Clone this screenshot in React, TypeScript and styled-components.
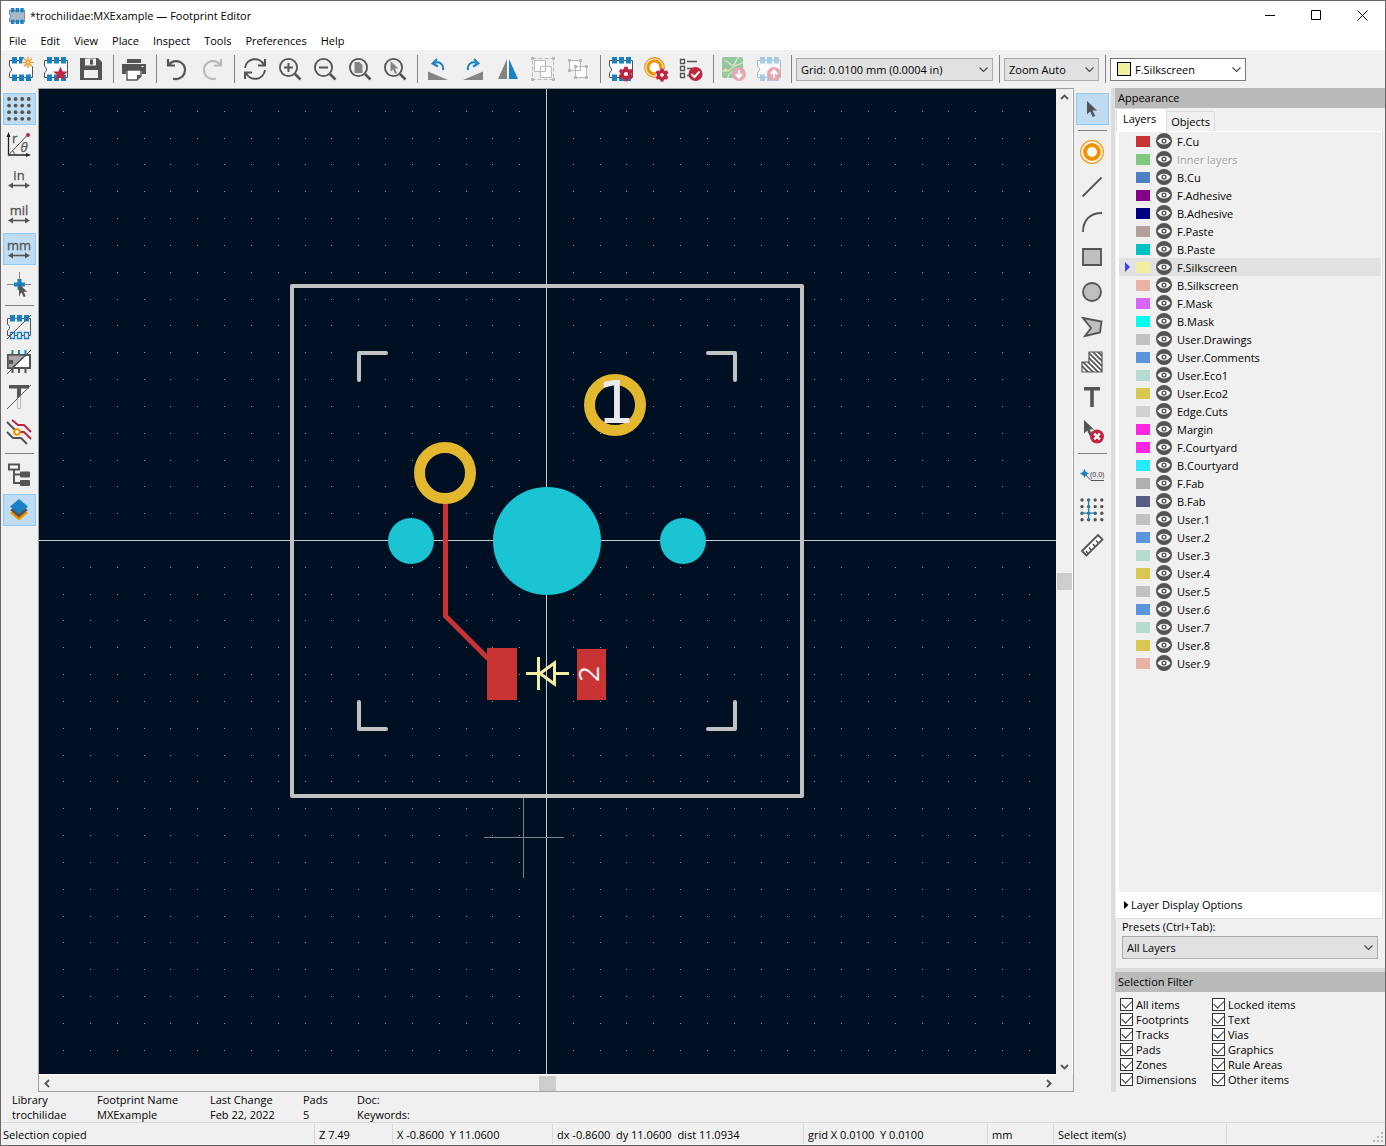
import React from "react";
import styled, { createGlobalStyle, css } from "styled-components";

const BLUE = "#1a81c4";
const DARK = "#545454";
const RED = "#bf2641";
const ORANGE = "#f29100";
const FACE = "#f0f0f0";
const LINE = "#a0a0a0";

const Global = createGlobalStyle`
  * { box-sizing: border-box; }
  body { margin: 0; }
  body, button, select, input {
    font-family: "Open Sans", "Noto Sans", sans-serif;
    font-size: 11px;
    line-height: 15px;
    color: #000;
  }
`;

/* ---------- window chrome ---------- */

const Window = styled.div`
  display: flex;
  flex-direction: column;
  min-height: 100vh;
  border: 1px solid #666;
  background: ${FACE};
`;

const TitleBar = styled.header`
  display: flex;
  align-items: center;
  height: 29px;
  padding-left: 8px;
  gap: 5px;
  background: #fff;
`;

const Title = styled.h1`
  flex: 1;
  margin: 0;
  font-size: 11px;
  font-weight: 400;
`;

const CaptionButtons = styled.div`
  display: flex;
`;

const CaptionButton = styled.button`
  display: grid;
  place-items: center;
  width: 46px;
  height: 29px;
  padding: 0;
  border: 0;
  background: none;
`;

const MenuBar = styled.nav`
  display: flex;
  height: 20px;
  padding: 0 1px 1px;
  background: #fff;
`;

const MenuItem = styled.button`
  padding: 2px 7px 1px;
  border: 0;
  background: none;
`;

/* ---------- toolbars ---------- */

const TopBar = styled.div`
  display: flex;
  align-items: center;
  gap: 3px;
  height: 38px;
  padding: 0 4px;
`;

const SideBar = styled.div`
  display: flex;
  flex-direction: column;
  flex: none;
  align-items: center;
  gap: 3px;
  width: 37px;
  padding-top: 5px;
`;

const ToolButton = styled.button<{ $active?: boolean; $wide?: boolean }>`
  display: grid;
  place-items: center;
  flex: none;
  width: ${(p) => (p.$wide ? 33 : 32)}px;
  height: 32px;
  padding: ${(p) => (p.$wide ? "0 1px 0 0" : "0")};
  border: 1px solid ${(p) => (p.$active ? "#90c8f6" : "transparent")};
  background: ${(p) => (p.$active ? "#c0dcf3" : "transparent")};
`;

const Rule = styled.span<{ $across?: boolean }>`
  flex: none;
  ${(p) =>
    p.$across
      ? css`
          width: 29px;
          height: 5px;
          background: linear-gradient(#848484, #848484) center / 100% 1px no-repeat;
        `
      : css`
          width: 5px;
          height: 28px;
          background: linear-gradient(#848484, #848484) 3px 0 / 1px 100% no-repeat;
        `}
`;

const Picker = styled.span<{ $width?: number; $light?: boolean }>`
  position: relative;
  display: flex;
  flex: none;
  align-items: center;
  width: ${(p) => (p.$width ? p.$width + "px" : "auto")};
  height: 23px;
  border: 1px solid ${(p) => (p.$light ? "#7a7a7a" : "#adadad")};
  background: ${(p) => (p.$light ? "#fff" : "#e1e1e1")};
`;

const PickerSelect = styled.select`
  appearance: none;
  flex: 1;
  min-width: 0;
  height: 21px;
  padding: 0 20px 0 4px;
  border: 0;
  background: transparent;
`;

const PickerArrow = styled.svg`
  position: absolute;
  right: 4px;
  top: 8px;
  pointer-events: none;
`;

const PickerSwatch = styled.span`
  width: 14px;
  height: 14px;
  margin-left: 6px;
  border: 1px solid #000;
  background: #f2eda1;
`;

/* ---------- work area ---------- */

const Work = styled.main`
  display: flex;
  flex: 1;
`;

const CanvasFrame = styled.section`
  display: grid;
  grid-template-columns: 1fr 17px;
  grid-template-rows: 1fr 17px;
  flex: 1;
  min-width: 0;
  border: 1px solid ${LINE};
`;

const Board = styled.div`
  position: relative;
  min-height: 760px;
  background: #001023;
`;

const Drawing = styled.svg`
  position: absolute;
  inset: 0;
  width: 100%;
  height: 100%;
`;

const ScrollTrack = styled.div<{ $across?: boolean }>`
  display: flex;
  flex-direction: ${(p) => (p.$across ? "row" : "column")};
  align-items: center;
  justify-content: space-between;
  border-right: ${(p) => (p.$across ? "0" : "1px solid #fff")};
  border-top: ${(p) => (p.$across ? "1px solid #fff" : "0")};
`;

const ScrollButton = styled.button`
  display: grid;
  place-items: center;
  width: 16px;
  height: 16px;
  padding: 0;
  border: 0;
  background: none;
`;

const Thumb = styled.span<{ $across?: boolean }>`
  width: ${(p) => (p.$across ? 17 : 15)}px;
  height: ${(p) => (p.$across ? 15 : 17)}px;
  background: #cdcdcd;
`;

/* ---------- side panels ---------- */

const Side = styled.aside`
  display: flex;
  flex-direction: column;
  flex: none;
  width: 274px;
  border-left: 4px solid #dcdcdc;
`;

const PanelTitle = styled.h2`
  flex: none;
  height: 20px;
  margin: 0;
  padding: 2px 3px;
  font-size: 11px;
  line-height: 15px;
  font-weight: 400;
  background: #bababa;
`;

const Tabs = styled.div`
  display: flex;
  align-items: flex-end;
  height: 23px;
  padding-left: 1px;
`;

const Tab = styled.button<{ $active?: boolean }>`
  height: ${(p) => (p.$active ? 23 : 20)}px;
  padding: ${(p) => (p.$active ? "0 10px 4px 6px" : "0 4px 1px")};
  border: 1px solid #dcdcdc;
  border-left-width: ${(p) => (p.$active ? 1 : 0)}px;
  border-bottom: 0;
  background: ${(p) => (p.$active ? "#fff" : FACE)};
`;

const TabPage = styled.div`
  display: flex;
  flex: 1;
  flex-direction: column;
  margin: 0 2px 0 1px;
  padding-top: 1px;
  border-right: 1px solid #dcdcdc;
  border-bottom: 1px solid #dcdcdc;
  background: #fff;
`;

const LayerList = styled.ul`
  flex: 1;
  margin: 0 1px 0 3px;
  padding: 0;
  list-style: none;
  background: ${FACE};
`;

const LayerRow = styled.li<{ $current?: boolean }>`
  display: flex;
  align-items: center;
  height: 18px;
  padding-left: 6px;
  background: ${(p) => (p.$current ? "#e1e1e1" : "transparent")};
`;

const RowMarker = styled.span<{ $on?: boolean }>`
  width: 5px;
  height: 10px;
  margin-right: 6px;
  background: ${(p) => (p.$on ? "#4040ff" : "transparent")};
  clip-path: polygon(0 0, 100% 50%, 0 100%);
`;

const Swatch = styled.span<{ $color: string }>`
  width: 14px;
  height: 11px;
  background: ${(p) => p.$color};
`;

const EyeButton = styled.button`
  display: grid;
  width: 16px;
  height: 16px;
  margin: 0 5px 0 6px;
  padding: 0;
  border: 0;
  background: none;
`;

const LayerName = styled.span<{ $dim?: boolean }>`
  color: ${(p) => (p.$dim ? "#a0a0a0" : "#000")};
  text-shadow: ${(p) => (p.$dim ? "1px 1px 0 #fff" : "none")};
`;

const Disclosure = styled.button`
  display: flex;
  align-items: center;
  gap: 2px;
  height: 26px;
  padding: 0 8px 1px;
  border: 0;
  background: none;
`;

const Presets = styled.div`
  display: flex;
  flex-direction: column;
  gap: 2px;
  padding: 0 7px 9px 6px;
  border-left: 1px solid #dcdcdc;
`;

const FilterPanel = styled.section`
  border-top: 4px solid #dcdcdc;
`;

const FilterGrid = styled.div`
  display: grid;
  grid-template-columns: 92px 1fr;
  grid-auto-rows: 15px;
  padding: 5px 4px;
  border-left: 1px solid #dcdcdc;
`;

const CheckLabel = styled.label`
  display: flex;
  align-items: center;
  gap: 3px;
`;

const CheckBox = styled.input`
  appearance: none;
  display: grid;
  place-items: center;
  width: 13px;
  height: 13px;
  margin: 0;
  border: 1px solid #333;
  background: #fff;
  &:checked::before {
    content: "";
    width: 9px;
    height: 5px;
    margin-top: -3px;
    border: solid #333;
    border-width: 0 0 1px 1px;
    transform: rotate(-45deg);
  }
`;

/* ---------- bottom bars ---------- */

const InfoBar = styled.dl`
  display: flex;
  flex: none;
  height: 31px;
  margin: 0;
  padding: 0 11px;
  border-bottom: 1px solid #d7d7d7;
`;

const InfoItem = styled.div<{ $width: number }>`
  width: ${(p) => p.$width}px;
`;

const InfoTerm = styled.dt`
  margin: 0;
`;

const InfoValue = styled.dd`
  margin: 0;
`;

const StatusBar = styled.footer`
  display: flex;
  flex: none;
  height: 22px;
  padding: 1px 0;
`;

const StatusCell = styled.span<{ $width?: number; $first?: boolean }>`
  flex: ${(p) => (p.$width ? "none" : "1")};
  width: ${(p) => (p.$width ? p.$width + "px" : "auto")};
  padding: 3px 0 0 ${(p) => (p.$first ? 2 : 4)}px;
  border-left: ${(p) => (p.$first ? "0" : "1px solid #d7d7d7")};
  white-space: pre;
`;

const Grip = styled.svg`
  align-self: flex-end;
`;

/* ---------- icons ---------- */

function Body({ fill = "#fff", pads = BLUE, line = DARK }: { fill?: string; pads?: string; line?: string }) {
  return (
    <>
      <path d="M.5 3.5h23v17H.5v-4.500l2-2.500v-2l-2-2.500z" fill={fill} stroke={line} />
      <path d="M3 0h5v6.500H3zM10 0h5v6.500h-5zM17 0h5v6.500h-5zM3 17.500h5V24H3zM10 17.500h5V24h-5zM17 17.500h5V24h-5z" fill={pads} />
    </>
  );
}

function Gear({ x, y }: { x: number; y: number }) {
  return (
    <g transform={`translate(${x} ${y})`}>
      <circle r="3.900" fill="none" stroke={RED} strokeWidth="3.600" />
      {[0, 60, 120, 180, 240, 300].map((a) => (
        <rect key={a} x="-1.800" y="-7.300" width="3.600" height="3.500" fill={RED} transform={`rotate(${a})`} />
      ))}
    </g>
  );
}

function Lens({ children }: { children?: React.ReactNode }) {
  return (
    <>
      <circle cx="10.500" cy="10.500" r="8.600" fill="none" stroke={DARK} strokeWidth="1.800" />
      <path d="M17 17l5.500 5.500" stroke={DARK} strokeWidth="2.600" />
      {children}
    </>
  );
}

function Dots({ step, start, r }: { step: number; start: number; r: number }) {
  return (
    <>
      {[0, 1, 2, 3].flatMap((i) =>
        [0, 1, 2, 3].map((j) => (
          <circle key={`${i}${j}`} cx={start + i * step} cy={start + j * step} r={r} fill={DARK} />
        ))
      )}
    </>
  );
}

function UnitText({ children }: { children: string }) {
  return (
    <>
      <text x="12" y="13" textAnchor="middle" fontSize="13" fontFamily="Open Sans, sans-serif" fill={DARK} stroke={DARK} strokeWidth=".3">
        {children}
      </text>
      <path d="M4 18.500h16" stroke={DARK} strokeWidth="1.600" />
      <path d="M1 18.500l5-3v6zM23 18.500l-5-3v6z" fill={DARK} />
    </>
  );
}

const pointer = "M0 0v13.500l3.200-3 2.600 5.500 2.400-1.100-2.600-5.400h4.400z";

const icons: Record<string, React.ReactNode> = {
  newFootprint: (
    <>
      <Body />
      <circle cx="19" cy="5.500" r="6" fill={FACE} />
      <g stroke={ORANGE} strokeWidth="1.200">
        <path d="M19 0v3.500M19 7.500V11M13.500 5.500H17M21 5.500h3.500M15.200 1.700l2.300 2.300M20.500 7l2.300 2.300M22.800 1.700L20.500 4M17.500 7l-2.300 2.300" />
        <circle cx="19" cy="5.500" r="1.700" fill="#fff" />
      </g>
    </>
  ),
  wizard: (
    <>
      <Body />
      <path d="M16.500 9.500l2.100 5h5.400l-4.300 3.400 1.700 5.600-4.900-3.300-4.900 3.300 1.700-5.600-4.300-3.400h5.400z" fill={RED} />
    </>
  ),
  save: (
    <>
      <path d="M1 1h18l4 4v18H1z" fill={DARK} />
      <path d="M6 1.500h11v7H6zM5 13h14v8H5z" fill={FACE} />
      <path d="M11 2.500h3v5h-3z" fill={DARK} />
    </>
  ),
  print: (
    <>
      <path d="M5 2h14v4H5z" fill={DARK} />
      <path d="M0 7h24v10h-4v-3H4v3H0z" fill={DARK} />
      <path d="M5 13h14v6l-4 4H5z" fill="#fff" stroke={DARK} strokeWidth="1.400" />
      <path d="M19 18h-4v5z" fill={DARK} />
      <path d="M19.500 9.500h2" stroke="#fff" />
    </>
  ),
  undo: <path d="M3 2v6.500h7M3.500 8.200A9 9 0 1 1 8 21.500" fill="none" stroke={DARK} strokeWidth="2.200" />,
  redo: <path d="M21 2v6.500h-7M20.500 8.200A9 9 0 1 0 16 21.500" fill="none" stroke="#b9b9b9" strokeWidth="2.200" />,
  refresh: (
    <g fill="none" stroke={DARK} strokeWidth="2">
      <path d="M2 11A10 10 0 0 1 21 8M22 13A10 10 0 0 1 3 16" />
      <path d="M22 2v6.500h-7M2 22v-6.500h7" />
    </g>
  ),
  zoomIn: <Lens><path d="M6 10.500h9M10.500 6v9" stroke={DARK} strokeWidth="2" /></Lens>,
  zoomOut: <Lens><path d="M6 10.500h9" stroke={DARK} strokeWidth="2" /></Lens>,
  zoomFit: <Lens><path d="M6.500 5h5l3 3v8h-8z" fill="#848484" /></Lens>,
  zoomSel: <Lens><g transform="translate(7.500 4) scale(.8)"><path d={pointer} fill="#848484" /></g></Lens>,
  rotL: (
    <>
      <path d="M2 14.500V23h20z" fill="#848484" />
      <path d="M17 13c1-6-4-9-8.500-7" fill="none" stroke={BLUE} strokeWidth="2" />
      <path d="M11 2L6.500 6.500l5.500 3" fill="none" stroke={BLUE} strokeWidth="2" />
    </>
  ),
  rotR: (
    <>
      <path d="M22 14.500V23H2z" fill="#848484" />
      <path d="M7 13c-1-6 4-9 8.500-7" fill="none" stroke={BLUE} strokeWidth="2" />
      <path d="M13 2l4.500 4.500-5.500 3" fill="none" stroke={BLUE} strokeWidth="2" />
    </>
  ),
  mirror: (
    <>
      <path d="M11 2v20H2z" fill="#848484" />
      <path d="M13 2v20h9z" fill={BLUE} />
    </>
  ),
  group: (
    <>
      <path d="M1.500 1.500h21v21h-21z" fill="none" stroke="#b9b9b9" strokeDasharray="4 2" />
      <path d="M3.500 3.500h11v11h-11zM9.500 9.500h11v11h-11z" fill="#fff" stroke="#b9b9b9" />
      <path d="M0 0h3v3H0zM21 0h3v3h-3zM0 21h3v3H0zM21 21h3v3h-3z" fill="#b9b9b9" />
    </>
  ),
  ungroup: (
    <>
      <path d="M3.500 3.500h11v10h-11zM9.500 9.500h11v11h-11z" fill="#fff" stroke="#b9b9b9" />
      <path d="M2 2h3v3H2zM13 2h3v3h-3zM2 12h3v3H2zM8 8h3v3H8zM19 8h3v3h-3zM8 19h3v3H8zM19 19h3v3h-3z" fill="#b9b9b9" />
    </>
  ),
  fpProps: <><Body /><circle cx="17" cy="17" r="5" fill="#fff" /><Gear x={17} y={17} /></>,
  padProps: (
    <>
      <circle cx="10.500" cy="10.500" r="9.800" fill="none" stroke={ORANGE} strokeWidth="1.200" />
      <circle cx="10.500" cy="10.500" r="6.500" fill="#fff" stroke={ORANGE} strokeWidth="3" />
      <circle cx="18" cy="18" r="6.500" fill={FACE} />
      <g transform="translate(18 18) scale(.9)"><Gear x={0} y={0} /></g>
    </>
  ),
  check: (
    <>
      <path d="M1.500 2.500h4v4h-4zM1.500 9.500h4v4h-4zM1.500 16.500h4v4h-4z" fill="none" stroke={DARK} strokeWidth="1.300" />
      <path d="M8 4.500h10M8 11.500h6M8 18.500h2" stroke={DARK} strokeWidth="1.300" />
      <circle cx="16.500" cy="17" r="7" fill={RED} />
      <path d="M12.500 17l3 3 5-5.500" fill="none" stroke="#fff" strokeWidth="2" />
    </>
  ),
  loadBoard: (
    <g>
      <rect x="0" y="0" width="21" height="21" rx="2" fill="#96c79c" />
      <path d="M2 4c6-1 5 5 9 4s2-6 6-8M0 14c5-1 6 2 10-3s8-2 11-6M6 21c0-6 6-6 8-9" fill="none" stroke="#d5ead7" strokeWidth="1.200" />
      <circle cx="3.500" cy="13" r="1.800" fill="#f6d9a4" />
      <circle cx="17" cy="17" r="7" fill="#e5a8b3" />
      <path d="M17 13v7M13.800 17l3.200 3.500 3.200-3.500" fill="none" stroke="#fff" strokeWidth="2" />
    </g>
  ),
  insertBoard: (
    <>
      <Body fill="#f8f8f8" pads="#a3cce7" line="#b9b9b9" />
      <circle cx="17" cy="17" r="7" fill="#e5a8b3" />
      <path d="M17 21v-7M13.800 17l3.200-3.500 3.200 3.500" fill="none" stroke="#fff" strokeWidth="2" />
    </>
  ),
  grid: <Dots step={6.600} start={2} r={1.900} />,
  polar: (
    <>
      <path d="M1.500 3v20H21" fill="none" stroke="#222" strokeWidth="1.300" />
      <path d="M1.500 0l2 5h-4zM24 23l-5-2v4z" fill="#222" />
      <path d="M1.500 23L20 3.500M5.500 18.500a6 6 0 0 1 2 4" fill="none" stroke={DARK} />
      <circle cx="21" cy="3" r="2" fill={RED} />
      <text x="5" y="11" fontSize="13" fontFamily="Open Sans, sans-serif" fill={DARK} stroke={DARK} strokeWidth=".3">r</text>
      <text x="13.500" y="20" fontSize="13" fontStyle="italic" fontFamily="Open Sans, sans-serif" fill={DARK} stroke={DARK} strokeWidth=".3">θ</text>
    </>
  ),
  inch: <UnitText>in</UnitText>,
  mil: <UnitText>mil</UnitText>,
  mm: <UnitText>mm</UnitText>,
  cursor: (
    <>
      <path d="M12.500 0v24M0 12.500h24" stroke="#848484" />
      <path d="M12.500 7v11M7 12.500h11" stroke={BLUE} strokeWidth="4" />
      <g transform="translate(12 12) scale(.82)"><path d={pointer} fill={DARK} /></g>
    </>
  ),
  padSketch: (
    <>
      <path d="M.5 3.500h23v17H.5v-4.500l2-2.500v-2l-2-2.500z" fill="none" stroke={DARK} />
      <path d="M3 0h5v6.500H3zM10 0h5v6.500h-5zM17 0h5v6.500h-5z" fill={BLUE} />
      <path d="M3.500 17.500h4v6h-4zM10.500 17.500h4v6h-4zM17.500 17.500h4v6h-4z" fill={FACE} stroke={BLUE} strokeWidth="1.300" />
      <path d="M0 24L24 0" stroke={DARK} />
    </>
  ),
  graphicSketch: (
    <>
      <path d="M5.500 0v5M12 0v5M18.500 0v5" stroke={BLUE} strokeWidth="2" />
      <path d="M5.500 18v5M12 18v5M18.500 18v5" stroke={DARK} strokeWidth="2" />
      <path d="M1 5h22v13H1z" fill="#fff" stroke={DARK} strokeWidth="2" />
      <path d="M1 5h18L5 18H1z" fill="#a9a9a9" stroke={DARK} strokeWidth="1.400" />
      <path d="M2 10h4v4H2z" fill={DARK} />
      <path d="M0 24L24 0" stroke={DARK} />
    </>
  ),
  textSketch: (
    <>
      <path d="M2 0h20v3.500h-8v6l-4 4v-10H2z" fill={DARK} />
      <path d="M10.500 14v9.500h3V10" fill="none" stroke="#b9b9b9" />
      <path d="M0 24L24 0" stroke={DARK} />
    </>
  ),
  contrast: (
    <g fill="none" strokeWidth="2">
      <path d="M5 0l6 5h6l7 7M12 12h5l7 7" stroke={RED} />
      <path d="M0 2l8 8M0 12l6 6h8l6 6" stroke={DARK} />
      <circle cx="10" cy="12" r="2.800" stroke={ORANGE} fill="#fff" />
    </g>
  ),
  tree: (
    <>
      <path d="M2 1.500h10v5H2z" fill="#fff" stroke={DARK} strokeWidth="2" />
      <path d="M7 7v13h7M7 11.500h7" fill="none" stroke={DARK} strokeWidth="2" />
      <rect x="13" y="8.500" width="10" height="6" rx="1" fill={DARK} />
      <rect x="13" y="17" width="10" height="6" rx="1" fill={DARK} />
    </>
  ),
  layers: (
    <>
      <path d="M3 15l9 7.500 9-7.500-9-6z" fill={ORANGE} />
      <path d="M3 12l9 7.500 9-7.500-9-6z" fill={DARK} />
      <path d="M3 8.500L12 1l9 7.500-9 7.500z" fill={BLUE} />
    </>
  ),
  select: <g transform="translate(7 4)"><path d={pointer} fill={DARK} /></g>,
  pad: (
    <>
      <circle cx="12" cy="12" r="11.300" fill="#fff" stroke={ORANGE} strokeWidth="1.200" />
      <circle cx="12" cy="12" r="7" fill="#fff" stroke={ORANGE} strokeWidth="4" />
    </>
  ),
  line: <path d="M2.500 21.500l19-19" stroke={DARK} strokeWidth="1.800" />,
  arc: <path d="M3 22C3 10 10 3 22 3" fill="none" stroke={DARK} strokeWidth="1.800" />,
  rect: <path d="M3 4h18v16H3z" fill="#bfbfbf" stroke={DARK} strokeWidth="1.800" />,
  circle: <circle cx="12" cy="12" r="9" fill="#bfbfbf" stroke={DARK} strokeWidth="1.800" />,
  polygon: <path d="M3 3l18.500 3.500L20 17.500 5 21l6-8z" fill="#bfbfbf" stroke={DARK} strokeWidth="1.800" />,
  zone: (
    <>
      <clipPath id="zoneShape"><path d="M9 2h13v20H2V12h7z" /></clipPath>
      <g clipPath="url(#zoneShape)">
        <path d="M0 0h24v24H0z" fill="#fff" />
        <path d="M-4 0l28 28M-4 5l24 24M-4 10l20 20M1 0l26 26M6 0l22 22M11 0l18 18M16 0l12 12" stroke={DARK} strokeWidth="1.800" />
      </g>
      <path d="M9 2h13v20H2V12h7z" fill="none" stroke={DARK} strokeWidth="1.200" />
    </>
  ),
  text: <path d="M4 2h16v3.500h-6.200V22h-3.600V5.500H4z" fill={DARK} />,
  erase: (
    <>
      <g transform="translate(4 0)"><path d={pointer} fill={DARK} /></g>
      <circle cx="17" cy="16.500" r="7" fill={RED} />
      <path d="M14.200 13.700l5.600 5.600M19.800 13.700l-5.600 5.600" stroke="#fff" strokeWidth="2.400" />
    </>
  ),
  anchor: (
    <>
      <circle cx="4.500" cy="10.500" r="2.500" fill={BLUE} />
      <path d="M4.500 6.500v8M.5 10.500h8" stroke={BLUE} strokeWidth="1.300" />
      <path d="M5 11l6 6.500h13" fill="none" stroke={DARK} />
      <text x="10" y="14" fontSize="7" fontFamily="Liberation Sans, sans-serif" fill="#333">(0,0)</text>
    </>
  ),
  gridOrigin: (
    <>
      <Dots step={6.600} start={2} r={1.700} />
      <path d="M8.600 1v21M1 15.200h15" stroke={BLUE} strokeWidth="1.300" />
    </>
  ),
  measure: (
    <>
      <path d="M2 18L18 2l4.500 4.500-16 16z" fill="#fff" stroke={DARK} strokeWidth="1.800" />
      <path d="M8 20.500L6 18M11.500 17L9 14.500M15 13.500l-2-2.500M18.500 10L16 7.500" stroke={DARK} strokeWidth="1.600" />
    </>
  ),
};

function Icon({ name }: { name: string }) {
  return (
    <svg width="24" height="24" viewBox="0 0 24 24" overflow="visible" aria-hidden="true">
      {icons[name]}
    </svg>
  );
}

function Tools({ names, active = [], across }: { names: string[]; active?: string[]; across?: boolean }) {
  return (
    <>
      {names.map((n, i) =>
        n === "|" ? (
          <Rule key={i} $across={across} />
        ) : (
          <ToolButton key={i} aria-label={n} $wide={across} $active={active.includes(n)}>
            <Icon name={n} />
          </ToolButton>
        )
      )}
    </>
  );
}

function Choice({ label, id, width, light }: { label: string; id: string; width?: number; light?: boolean }) {
  return (
    <Picker $width={width} $light={light}>
      {light && <PickerSwatch />}
      <PickerSelect id={id} aria-label={id}>
        <option>{label}</option>
      </PickerSelect>
      <PickerArrow width="9" height="6" viewBox="0 0 9 6">
        <path d="M.5 .5l4 4 4-4" fill="none" stroke="#444" strokeWidth="1.100" />
      </PickerArrow>
    </Picker>
  );
}

const chevrons: Record<string, string> = {
  up: "M1 6l3.500-3.500L8 6",
  down: "M1 3l3.500 3.500L8 3",
  left: "M6 1L2.500 4.500 6 8",
  right: "M3 1l3.500 3.500L3 8",
};

function ScrollArrow({ dir }: { dir: string }) {
  return (
    <ScrollButton aria-label={`Scroll ${dir}`}>
      <svg width="9" height="9" viewBox="0 0 9 9">
        <path d={chevrons[dir]} fill="none" stroke={DARK} strokeWidth="1.800" />
      </svg>
    </ScrollButton>
  );
}

function Eye() {
  return (
    <svg width="16" height="16" viewBox="0 0 16 16">
      <circle cx="8" cy="8" r="8" fill={DARK} />
      <path d="M1.500 8C4 3.500 12 3.500 14.500 8 12 12.500 4 12.500 1.500 8z" fill="#fff" />
      <circle cx="8" cy="8" r="2.600" fill={DARK} />
      <rect x="7" y="7" width="2" height="2" fill="#fff" />
    </svg>
  );
}

/* ---------- board drawing ---------- */

const GRID_PITCH = 26.83;

// One-pixel dots on both sides of the origin, each snapped to a whole pixel.
function gridPath(originX: number, originY: number) {
  let d = "";
  for (let row = -17; row <= 40; row++) {
    for (let col = -19; col <= 70; col++) {
      d += `M${Math.round(originX + col * GRID_PITCH)} ${Math.round(originY + row * GRID_PITCH)}h1v1h-1z`;
    }
  }
  return d;
}

const dots = gridPath(507, 451);

function Footprint() {
  return (
    <Drawing role="img" aria-label="Footprint canvas">
      <path d={dots} fill="#8b9299" shapeRendering="crispEdges" />
      <g fill="#c8ccd0" shapeRendering="crispEdges">
        <rect x="507" y="0" width="1" height="100%" />
        <rect x="0" y="451" width="100%" height="1" />
      </g>
      <g transform="translate(508 452)">
        <g fill="none" stroke="#c2c2c2" strokeWidth="4" strokeLinecap="round" strokeLinejoin="round">
          <rect x="-255" y="-255" width="510" height="510" />
          <path d="M-188-161v-27h27M161-188h27v27M188 161v27h-27M-161 188h-27v-27" />
        </g>
        <path d="M-101.500-40V75l46 46" fill="none" stroke="#c83434" strokeWidth="5" />
        <g fill="#1ac4d2">
          <circle r="54" />
          <circle cx="-136" r="23" />
          <circle cx="136" r="23" />
        </g>
        <g fill="#001023" stroke="#e3b72e" strokeWidth="11">
          <circle cx="-102" cy="-68" r="25.500" />
          <circle cx="68" cy="-136" r="25.500" />
        </g>
        <path d="M-60 107h30v52h-30zM30 108h29v51H30z" fill="#c83434" />
        <path d="M-21 132.500H-8M9 132.500h13M-8.500 116v33M-7 132.500L7.500 122v21z" fill="none" stroke="#f2eda1" strokeWidth="3" />
        <g fill="#e8eaee" textAnchor="middle">
          <text x="69" y="-118" fontSize="59" fontFamily="DejaVu Sans, sans-serif">1</text>
          <text transform="translate(52 133) rotate(-90)" fontSize="28" fontFamily="Open Sans, sans-serif">2</text>
        </g>
        <path d="M-63 296.500H17M-23.500 257v80" stroke="#7b828a" fill="none" />
      </g>
    </Drawing>
  );
}

/* ---------- data ---------- */

const layers: [string, string][] = [
  ["F.Cu", "#c83434"], ["Inner layers", "#7fc87f"], ["B.Cu", "#4d7fc4"], ["F.Adhesive", "#840084"],
  ["B.Adhesive", "#000084"], ["F.Paste", "#b4a09a"], ["B.Paste", "#00c2c2"], ["F.Silkscreen", "#f2eda1"],
  ["B.Silkscreen", "#e8b2a7"], ["F.Mask", "#d864ff"], ["B.Mask", "#02ffee"], ["User.Drawings", "#c2c2c2"],
  ["User.Comments", "#5994dc"], ["User.Eco1", "#b4dbd2"], ["User.Eco2", "#d8c852"], ["Edge.Cuts", "#d0d2cd"],
  ["Margin", "#ff26e2"], ["F.Courtyard", "#ff26e2"], ["B.Courtyard", "#26e9ff"], ["F.Fab", "#afafaf"],
  ["B.Fab", "#585d84"], ["User.1", "#c2c2c2"], ["User.2", "#5994dc"], ["User.3", "#b4dbd2"],
  ["User.4", "#d8c852"], ["User.5", "#c2c2c2"], ["User.6", "#5994dc"], ["User.7", "#b4dbd2"],
  ["User.8", "#d8c852"], ["User.9", "#e8b2a7"],
];

const filters = [
  "All items", "Locked items", "Footprints", "Text", "Tracks", "Vias",
  "Pads", "Graphics", "Zones", "Rule Areas", "Dimensions", "Other items",
];

const info: [string, string, number][] = [
  ["Library", "trochilidae", 85],
  ["Footprint Name", "MXExample", 113],
  ["Last Change", "Feb 22, 2022", 93],
  ["Pads", "5", 54],
  ["Doc:", "Keywords:", 100],
];

const status: [string, number?][] = [
  ["Selection copied", 313],
  ["Z 7.49", 78],
  ["X -0.8600  Y 11.0600", 160],
  ["dx -0.8600  dy 11.0600  dist 11.0934", 251],
  ["grid X 0.0100  Y 0.0100", 184],
  ["mm", 66],
  ["Select item(s)", 173],
  [""],
];

export default function App() {
  return (
    <>
      <Global />
      <Window>
        <TitleBar>
          <svg width="16" height="16" viewBox="0 0 24 24"><Body fill="#a9b9c6" /></svg>
          <Title>*trochilidae:MXExample — Footprint Editor</Title>
          <CaptionButtons>
            <CaptionButton aria-label="Minimize"><svg width="11" height="11"><path d="M0 5.500h10" stroke="#000" /></svg></CaptionButton>
            <CaptionButton aria-label="Maximize"><svg width="11" height="11"><path d="M.5 .5h9v9h-9z" fill="none" stroke="#000" /></svg></CaptionButton>
            <CaptionButton aria-label="Close"><svg width="11" height="11"><path d="M.5 .5l10 10M10.500 .5l-10 10" stroke="#000" /></svg></CaptionButton>
          </CaptionButtons>
        </TitleBar>
        <MenuBar>
          {["File", "Edit", "View", "Place", "Inspect", "Tools", "Preferences", "Help"].map((m) => (
            <MenuItem key={m}>{m}</MenuItem>
          ))}
        </MenuBar>
        <TopBar>
          <Tools
            names={["newFootprint", "wizard", "save", "|", "print", "|", "undo", "redo", "|", "refresh", "zoomIn", "zoomOut", "zoomFit", "zoomSel", "|", "rotL", "rotR", "mirror", "group", "ungroup", "|", "fpProps", "padProps", "check", "|", "loadBoard", "insertBoard", "|"]}
          />
          <Choice id="Grid" label="Grid: 0.0100 mm (0.0004 in)" width={197} />
          <Rule />
          <Choice id="Zoom" label="Zoom Auto" width={95} />
          <Rule />
          <Choice id="Layer" label="F.Silkscreen" width={136} light />
        </TopBar>
        <Work>
          <SideBar>
            <Tools
              across
              active={["grid", "mm", "layers"]}
              names={["grid", "polar", "inch", "mil", "mm", "cursor", "|", "padSketch", "graphicSketch", "textSketch", "contrast", "|", "tree", "layers"]}
            />
          </SideBar>
          <CanvasFrame>
            <Board><Footprint /></Board>
            <ScrollTrack>
              <ScrollArrow dir="up" />
              <Thumb />
              <ScrollArrow dir="down" />
            </ScrollTrack>
            <ScrollTrack $across>
              <ScrollArrow dir="left" />
              <Thumb $across />
              <ScrollArrow dir="right" />
            </ScrollTrack>
          </CanvasFrame>
          <SideBar>
            <Tools
              across
              active={["select"]}
              names={["select", "|", "pad", "line", "arc", "rect", "circle", "polygon", "zone", "text", "erase", "|", "anchor", "gridOrigin", "measure"]}
            />
          </SideBar>
          <Side>
            <PanelTitle>Appearance</PanelTitle>
            <Tabs>
              <Tab $active>Layers</Tab>
              <Tab>Objects</Tab>
            </Tabs>
            <TabPage>
              <LayerList>
                {layers.map(([name, color]) => {
                  const current = name === "F.Silkscreen";
                  return (
                    <LayerRow key={name} $current={current}>
                      <RowMarker $on={current} />
                      <Swatch $color={color} />
                      <EyeButton aria-label={`Show ${name}`}><Eye /></EyeButton>
                      <LayerName $dim={name === "Inner layers"}>{name}</LayerName>
                    </LayerRow>
                  );
                })}
              </LayerList>
              <Disclosure>
                <svg width="5" height="8"><path d="M0 0l4.500 4L0 8z" /></svg>
                Layer Display Options
              </Disclosure>
            </TabPage>
            <Presets>
              <label htmlFor="Presets">Presets (Ctrl+Tab):</label>
              <Choice id="Presets" label="All Layers" />
            </Presets>
            <FilterPanel>
              <PanelTitle>Selection Filter</PanelTitle>
              <FilterGrid>
                {filters.map((f) => (
                  <CheckLabel key={f}>
                    <CheckBox type="checkbox" defaultChecked />
                    {f}
                  </CheckLabel>
                ))}
              </FilterGrid>
            </FilterPanel>
          </Side>
        </Work>
        <InfoBar>
          {info.map(([k, v, w]) => (
            <InfoItem key={k} $width={w}>
              <InfoTerm>{k}</InfoTerm>
              <InfoValue>{v}</InfoValue>
            </InfoItem>
          ))}
        </InfoBar>
        <StatusBar>
          {status.map(([t, w], i) => (
            <StatusCell key={i} $width={w} $first={i === 0}>{t}</StatusCell>
          ))}
          <Grip width="12" height="12" fill="#b8b8b8">
            <path d="M8 0h2v2H8zM4 4h2v2H4zM8 4h2v2H8zM0 8h2v2H0zM4 8h2v2H4zM8 8h2v2H8z" />
          </Grip>
        </StatusBar>
      </Window>
    </>
  );
}
